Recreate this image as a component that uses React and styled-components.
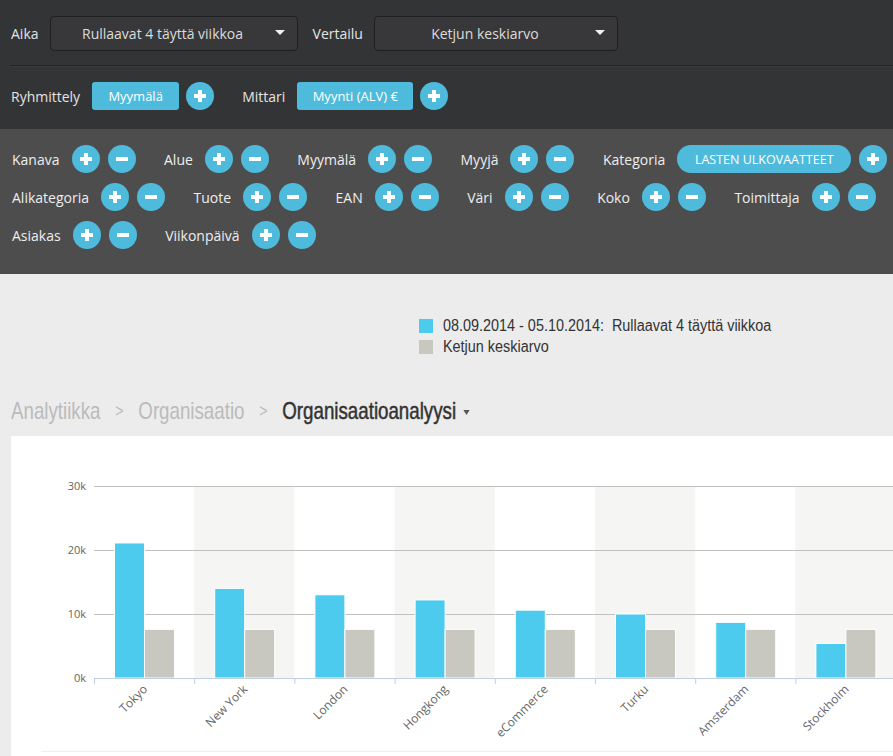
import React from 'react';
import styled, { createGlobalStyle } from 'styled-components';

const GlobalStyle = createGlobalStyle`
  body {
    margin: 0;
    background: #ececec;
    font-family: "Open Sans", "Liberation Sans", sans-serif;
  }
`;

const filters = [
  { label: 'Kanava' },
  { label: 'Alue' },
  { label: 'Myymälä' },
  { label: 'Myyjä' },
  { label: 'Kategoria', pill: 'LASTEN ULKOVAATTEET' },
  { label: 'Alikategoria' },
  { label: 'Tuote' },
  { label: 'EAN' },
  { label: 'Väri' },
  { label: 'Koko' },
  { label: 'Toimittaja' },
  { label: 'Asiakas' },
  { label: 'Viikonpäivä' },
];

const chartData = [
  { name: 'Tokyo', value: 21.1 },
  { name: 'New York', value: 14 },
  { name: 'London', value: 13 },
  { name: 'Hongkong', value: 12.2 },
  { name: 'eCommerce', value: 10.6 },
  { name: 'Turku', value: 10 },
  { name: 'Amsterdam', value: 8.7 },
  { name: 'Stockholm', value: 5.4 },
];
const AVG = 7.6;

const PlusMinus = ({ minus }) => (
  <RoundBtn>
    <Bar />
    {!minus && <Bar vertical />}
  </RoundBtn>
);

const Chart = () => {
  const left = 83;
  const zero = 242;
  const scale = 6.4;
  const band = 100.2;
  return (
    <svg width="882" height="321" viewBox="0 0 882 321">
      {chartData.map((d, i) =>
        i % 2 === 1 ? (
          <rect key={'b' + i} x={left + i * band} y={50} width={band} height={zero - 50} fill="#f5f5f3" />
        ) : null
      )}
      {[30, 20, 10].map((v) => (
        <line key={v} x1={left} x2={882} y1={zero - v * scale + 0.5} y2={zero - v * scale + 0.5} stroke="#c0c0c0" strokeWidth="1" />
      ))}
      {[30, 20, 10, 0].map((v) => (
        <text key={'l' + v} x={75} y={zero - v * scale + 4} textAnchor="end" fontSize="11" fill="#666" fontFamily="Open Sans, sans-serif">
          {v}k
        </text>
      ))}
      {chartData.map((d, i) => {
        const x0 = left + i * band;
        const h1 = d.value * scale;
        const h2 = AVG * scale;
        return (
          <g key={d.name}>
            <rect x={x0 + 20.5} y={zero - h1} width={30} height={h1} fill="#4ccbee" stroke="#fff" strokeWidth="1" />
            <rect x={x0 + 50.5} y={zero - h2} width={30} height={h2} fill="#c8c8c0" stroke="#fff" strokeWidth="1" />
          </g>
        );
      })}
      <line x1={left} x2={882} y1={zero + 0.5} y2={zero + 0.5} stroke="#c0d0e0" strokeWidth="1" />
      {chartData.map((d, i) => (
        <line key={'t' + i} x1={left + i * band + 0.5} x2={left + i * band + 0.5} y1={zero} y2={zero + 6} stroke="#c0d0e0" />
      ))}
      <line x1={left + 8 * band} x2={left + 8 * band} y1={zero} y2={zero + 6} stroke="#c0d0e0" />
      {chartData.map((d, i) => {
        const cx = left + i * band + band / 2 + 4;
        return (
          <text
            key={'x' + i}
            x={cx}
            y={zero + 12}
            textAnchor="end"
            fontSize="12"
            fill="#666"
            fontFamily="Open Sans, sans-serif"
            transform={`rotate(-45 ${cx} ${zero + 12})`}
          >
            {d.name}
          </text>
        );
      })}
      <line x1={30} x2={882} y1={315.5} y2={315.5} stroke="#eeeeee" />
    </svg>
  );
};

const App = () => {
  return (
    <Page>
      <GlobalStyle />
      <TopBar>
        <TopRow>
          <TopLabel>Aika</TopLabel>
          <Select width={248}>
            <span>Rullaavat 4 täyttä viikkoa</span>
            <Caret />
          </Select>
          <TopLabel lead={4}>Vertailu</TopLabel>
          <Select width={244}>
            <span>Ketjun keskiarvo</span>
            <Caret />
          </Select>
        </TopRow>
        <Divider />
        <TopRow second>
          <TopLabel>Ryhmittely</TopLabel>
          <ChipBtn width={87}>Myymälä</ChipBtn>
          <PlusMinus />
          <TopLabel lead={21}>Mittari</TopLabel>
          <ChipBtn width={116}>Myynti (ALV) €</ChipBtn>
          <PlusMinus />
        </TopRow>
      </TopBar>

      <FilterPanel>
        {filters.map((f) => (
          <FilterGroup key={f.label}>
            <FilterLabel>{f.label}</FilterLabel>
            {f.pill ? (
              <>
                <Pill>{f.pill}</Pill>
                <PlusMinus />
              </>
            ) : (
              <>
                <PlusMinus />
                <PlusMinus minus />
              </>
            )}
          </FilterGroup>
        ))}
      </FilterPanel>

      <Content>
        <Legend>
          <LegendRow>
            <Swatch color="#4ccbee" />
            <LegendText>08.09.2014 - 05.10.2014:&nbsp;&nbsp;Rullaavat 4 täyttä viikkoa</LegendText>
          </LegendRow>
          <LegendRow>
            <Swatch color="#c8c8c0" />
            <LegendText>Ketjun keskiarvo</LegendText>
          </LegendRow>
        </Legend>

        <Breadcrumb>
          <Trail>
            <Crumb>Analytiikka</Crumb>
            <Sep>&gt;</Sep>
            <Crumb>Organisaatio</Crumb>
            <Sep>&gt;</Sep>
            <Crumb current>Organisaatioanalyysi</Crumb>
            <SmallCaret />
          </Trail>
        </Breadcrumb>

        <Card>
          <Chart />
        </Card>
      </Content>
    </Page>
  );
};

export default App;

const Page = styled.div`
  width: 893px;
  overflow: hidden;
`;

const TopBar = styled.div`
  background: #333436;
`;

const TopRow = styled.div`
  display: flex;
  align-items: center;
  padding: ${(p) => (p.second ? '15px 0 19px 11px' : '16px 0 14px 11px')};
  gap: ${(p) => (p.second ? '7px' : '11px')};
`;

const TopLabel = styled.div`
  font-size: 14px;
  color: #e4e4e4;
  margin-left: ${(p) => p.lead || 0}px;
`;

const Select = styled.div`
  position: relative;
  width: ${(p) => p.width}px;
  height: 35px;
  box-sizing: border-box;
  border: 1px solid #1f1f21;
  border-radius: 4px;
  background: #38383a;
  display: flex;
  align-items: center;
  justify-content: center;
  padding-right: 22px;
  color: #dcdcdc;
  font-size: 14px;
`;

const Caret = styled.div`
  position: absolute;
  right: 12px;
  top: 13px;
  width: 0;
  height: 0;
  border-left: 5px solid transparent;
  border-right: 5px solid transparent;
  border-top: 5px solid #f2f2f2;
`;

const Divider = styled.div`
  height: 1px;
  margin-left: 10px;
  background: #232325;
  border-bottom: 1px solid #3a3a3c;
`;

const ChipBtn = styled.div`
  width: ${(p) => p.width}px;
  height: 28px;
  border-radius: 3px;
  background: #4ebbdc;
  color: #fff;
  font-size: 13px;
  display: flex;
  align-items: center;
  justify-content: center;
  margin-left: 5px;
`;

const RoundBtn = styled.div`
  position: relative;
  width: 28px;
  height: 28px;
  border-radius: 50%;
  background: #4ebbdc;
  flex-shrink: 0;
`;

const Bar = styled.span`
  position: absolute;
  background: #fff;
  left: ${(p) => (p.vertical ? 12 : 8)}px;
  top: ${(p) => (p.vertical ? 8 : 12)}px;
  width: ${(p) => (p.vertical ? 4 : 12)}px;
  height: ${(p) => (p.vertical ? 12 : 4)}px;
`;

const FilterPanel = styled.div`
  background: #4d4d4d;
  display: flex;
  flex-wrap: wrap;
  column-gap: 28.5px;
  row-gap: 10px;
  padding: 16px 0 25px 12px;
`;

const FilterGroup = styled.div`
  display: flex;
  align-items: center;
  gap: 8px;
`;

const FilterLabel = styled.div`
  font-size: 14px;
  color: #eeeeee;
  margin-right: 4px;
`;

const Pill = styled.div`
  width: 174px;
  height: 28px;
  border-radius: 14px;
  background: #4ebbdc;
  color: #fff;
  font-size: 12.5px;
  display: flex;
  align-items: center;
  justify-content: center;
`;

const Content = styled.div`
  padding-top: 41px;
`;

const Legend = styled.div`
  padding-left: 419px;
  font-family: "Liberation Sans", sans-serif;
  font-size: 16px;
  color: #333;
`;

const LegendRow = styled.div`
  display: flex;
  align-items: center;
  gap: 10px;
  height: 21px;
`;

const LegendText = styled.span`
  display: inline-block;
  white-space: nowrap;
  transform: scaleX(0.9);
  transform-origin: left center;
`;

const Swatch = styled.div`
  width: 14px;
  height: 14px;
  background: ${(p) => p.color};
`;

const Breadcrumb = styled.div`
  margin-top: 40px;
  padding-left: 11px;
  height: 28px;
`;

const Trail = styled.div`
  display: flex;
  align-items: center;
  height: 28px;
  white-space: nowrap;
  font-family: "Liberation Sans", sans-serif;
  font-size: 24px;
  transform: scaleX(0.78);
  transform-origin: left center;
`;

const Crumb = styled.span`
  color: ${(p) => (p.current ? '#333' : '#bbbbbb')};
  -webkit-text-stroke: ${(p) => (p.current ? '0.5px #333' : '0')};
`;

const Sep = styled.span`
  color: #bbbbbb;
  font-size: 18px;
  margin: 0 19px;
`;

const SmallCaret = styled.span`
  margin-left: 9px;
  margin-top: 3px;
  width: 0;
  height: 0;
  border-left: 4.5px solid transparent;
  border-right: 4.5px solid transparent;
  border-top: 5px solid #555;
`;

const Card = styled.div`
  margin: 11px 0 0 11px;
  background: #fff;
  height: 330px;
`;
